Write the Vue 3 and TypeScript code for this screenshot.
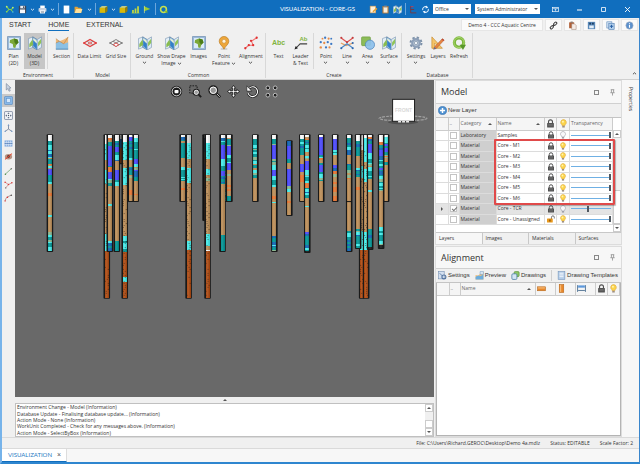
<script setup lang="ts">
import { ref } from 'vue'

interface BarItem { id: string; kind: 'btn' | 'sep' | 'chev'; icon?: string; label?: string; w: number }
interface RibbonItem { label: string[]; icon: string; w: number; drop?: boolean; on?: boolean; sepAfter?: boolean }
interface RibbonGroup { title: string; w: number; items: RibbonItem[] }
interface Layer { category: string; name: string; on: boolean; locked: boolean; lit: boolean; alpha: number }
interface Core { x: number; w: number; top: number; bottom: number; bands: string; seed: number; dots?: boolean; dark?: boolean }
interface Band { y: number; h: number; fill: string }

const quick: BarItem[] = [
  { id: 'q1', kind: 'btn', icon: 'plant', label: 'Application', w: 14 },
  { id: 'q2', kind: 'btn', icon: 'save', label: 'Save', w: 12 },
  { id: 'q3', kind: 'chev', label: 'Save options', w: 8 },
  { id: 'q4', kind: 'btn', icon: 'print', label: 'Print', w: 12 },
  { id: 'q5', kind: 'chev', label: 'Print options', w: 8 },
  { id: 'q6', kind: 'sep', w: 4 },
  { id: 'q7', kind: 'btn', icon: 'page', label: 'New', w: 12 },
  { id: 'q8', kind: 'btn', icon: 'folder', label: 'Open', w: 12 },
  { id: 'q9', kind: 'chev', label: 'Open recent', w: 10 },
  { id: 'q10', kind: 'sep', w: 3 },
  { id: 'q11', kind: 'btn', icon: 'cube', label: 'Model', w: 13 },
  { id: 'q12', kind: 'chev', label: 'Model options', w: 7 },
  { id: 'q13', kind: 'btn', icon: 'cube', label: 'Block', w: 12 },
  { id: 'q14', kind: 'btn', icon: 'bars', label: 'Chart', w: 12 },
  { id: 'q15', kind: 'btn', icon: 'flag', label: 'Flag', w: 12 },
  { id: 'q16', kind: 'sep', w: 4 },
  { id: 'q17', kind: 'btn', icon: 'cycle', label: 'Reload', w: 12 },
]
const quickRight: BarItem[] = [
  { id: 'r1', kind: 'btn', icon: 'noteedit', label: 'Edit note', w: 12 },
  { id: 'r2', kind: 'btn', icon: 'clipboard', label: 'Clipboard', w: 12 },
  { id: 'r3', kind: 'btn', icon: 'map', label: 'Map', w: 12 },
  { id: 'r4', kind: 'sep', w: 4 },
  { id: 'r5', kind: 'btn', icon: 'tree', label: 'Tree', w: 12 },
  { id: 'r6', kind: 'btn', icon: 'sync', label: 'Sync', w: 12 },
]
const groups: RibbonGroup[] = [
  { title: 'Environment', w: 72, items: [
    { label: ['Plan', '(2D)'], icon: 'plan', w: 21 },
    { label: ['Model', '(3D)'], icon: 'map', w: 21, on: true, sepAfter: true },
    { label: ['Section'], icon: 'section', w: 25 },
  ] },
  { title: 'Model', w: 57, items: [
    { label: ['Data Limit'], icon: 'datalimit', w: 29 },
    { label: ['Grid Size'], icon: 'gridsize', w: 24 },
  ] },
  { title: 'Common', w: 135, items: [
    { label: ['Ground'], icon: 'map', w: 25, drop: true },
    { label: ['Show Drape', 'Image'], icon: 'map', w: 29, drop: true },
    { label: ['Images'], icon: 'plan', w: 25 },
    { label: ['Point', 'Feature'], icon: 'pin', w: 26, drop: true },
    { label: ['Alignment'], icon: 'align', w: 28, drop: true },
  ] },
  { title: 'Create', w: 136, items: [
    { label: ['Text'], icon: 'abc', w: 23 },
    { label: ['Leader', '& Text'], icon: 'leader', w: 21, sepAfter: true },
    { label: ['Point'], icon: 'points', w: 22, drop: true },
    { label: ['Line'], icon: 'lines', w: 20, drop: true },
    { label: ['Area'], icon: 'area', w: 21, drop: true },
    { label: ['Surface'], icon: 'map', w: 22, drop: true },
  ] },
  { title: 'Database', w: 71, items: [
    { label: ['Settings'], icon: 'gear', w: 26, drop: true },
    { label: ['Layers'], icon: 'layers', w: 18 },
    { label: ['Refresh'], icon: 'refresh', w: 24 },
  ] },
]
const links = [
  { icon: 'chain', label: 'Link' },
  { icon: 'paste', label: 'Paste' },
  { icon: 'disk', label: 'Store' },
  { icon: 'copyadd', label: 'Duplicate' },
  { icon: 'info', label: 'Information' },
]
const sideTools = [
  { icon: 'cursor', label: 'Select', on: false, gap: false },
  { icon: 'boxsel', label: 'Select by box', on: true, gap: true },
  { icon: 'extent', label: 'Zoom extents', on: false, gap: false },
  { icon: 'axes', label: 'Axes', on: false, gap: true },
  { icon: 'grid', label: 'Grid', on: false, gap: false },
  { icon: 'hide', label: 'Hide', on: false, gap: true },
  { icon: 'line1', label: 'Line', on: false, gap: false },
  { icon: 'line2', label: 'Branch', on: false, gap: false },
  { icon: 'line3', label: 'Curve', on: false, gap: false },
]
const viewTools = [
  { icon: 'v-target', label: 'Home view' },
  { icon: 'v-zoombox', label: 'Zoom window' },
  { icon: 'v-zoom', label: 'Zoom' },
  { icon: 'v-pan', label: 'Pan' },
  { icon: 'v-rotate', label: 'Rotate' },
  { icon: 'v-fit', label: 'Fit' },
]
const layers = ref<Layer[]>([
  { category: 'Laboratory', name: 'Samples', on: false, locked: true, lit: false, alpha: 100 },
  { category: 'Material', name: 'Core - M1', on: false, locked: true, lit: true, alpha: 100 },
  { category: 'Material', name: 'Core - M2', on: false, locked: true, lit: true, alpha: 100 },
  { category: 'Material', name: 'Core - M3', on: false, locked: true, lit: true, alpha: 100 },
  { category: 'Material', name: 'Core - M4', on: false, locked: true, lit: true, alpha: 100 },
  { category: 'Material', name: 'Core - M5', on: false, locked: true, lit: true, alpha: 100 },
  { category: 'Material', name: 'Core - M6', on: false, locked: true, lit: true, alpha: 100 },
  { category: 'Material', name: 'Core - TCR', on: true, locked: true, lit: false, alpha: 43 },
  { category: 'Material', name: 'Core - Unassigned', on: false, locked: false, lit: true, alpha: 100 },
])
const messages = [
  'Environment Change - Model (Information)',
  'Database Update - Finalising database update... (Information)',
  'Action Mode - None (Information)',
  'WorkUnit Completed - Check for any messages above. (Information)',
  'Action Mode - SelectByBox (Information)',
]
const profile = ref('Office')
const user = ref('System Administrator')

/* Band codes: a letter and a thickness. Capitals are finely striped zones. */
const solid: Record<string, string> = {
  w: '#ffffff', g: '#d4d4d4', c: '#45f0ee', t: '#009696', b: '#4a48ff', n: '#1064b4',
  s: '#be8f58', o: '#ea7430', r: '#b04a10', k: '#141414', e: '#8ab890',
}
const mixed: Record<string, string[]> = {
  C: ['c', 't', 'c', 'e', 't'],
  T: ['t', 't', 'n', 't', 'c', 't'],
  B: ['n', 'b', 't', 'b'],
  S: ['s', 'c', 's', 'o', 'e', 't'],
  O: ['o', 's', 'o', 'o'],
}
const cores: Core[] = [
  { x: 47, w: 6, top: 134, bottom: 252, seed: 3, bands: 'w6 T13 n3 S12 b6 T6 C3 s4 O8 s19 c2 s15 S3 C7 T5 C5' },
  { x: 119, w: 4, top: 134, bottom: 164, seed: 4, dark: true, bands: 'w4 n9 r16' },
  { x: 104, w: 6, top: 134, bottom: 299, seed: 5, dots: true, bands: 'w9 c16 s10 c14 s50 c17 r48' },
  { x: 107, w: 6, top: 134, bottom: 252, seed: 6, bands: 'w3 O4 T4 b20 S6 b7 C7 s18 c2 s35 T11' },
  { x: 114, w: 6, top: 134, bottom: 252, seed: 7, bands: 'w6 T6 b5 T9 s9 b10 T4 c2 s55 C5 T10' },
  { x: 128, w: 6, top: 134, bottom: 202, seed: 8, bands: 'w2 b4 T19 s7 T6 S5 s12 O6 s5' },
  { x: 122, w: 6, top: 134, bottom: 299, seed: 9, dots: true, bands: 'w7 c18 s8 c17 s51 c5 C11 r25 c5 r17' },
  { x: 133, w: 6, top: 134, bottom: 202, seed: 10, bands: 'w3 C5 T16 B5 S6 B7 S4 s10 O4 s6' },
  { x: 180, w: 6, top: 134, bottom: 202, seed: 11, bands: 'w2 B4 O2 T15 s9 C13 T1 s7 O2 s11' },
  { x: 186, w: 6, top: 134, bottom: 299, seed: 12, dots: true, bands: 'g8 c16 s9 c15 s58 c9 r48' },
  { x: 203, w: 4, top: 134, bottom: 221, seed: 13, dark: true, bands: 'w3 n14 s12 b8 r48' },
  { x: 205, w: 6, top: 134, bottom: 299, seed: 14, dots: true, bands: 'w8 c16 s10 c6 S6 s53 c12 S4 w1 r48' },
  { x: 224, w: 4, top: 134, bottom: 202, seed: 15, dots: true, bands: 'w3 T14 s10 C17 O10 C12' },
  { x: 220, w: 6, top: 134, bottom: 252, seed: 16, bands: 'w3 T7 b14 c7 C5 b5 T8 s51 T12 S3 T3' },
  { x: 227, w: 6, top: 134, bottom: 202, seed: 17, bands: 'w3 S8 b9 C8 b7 S6 s9 O6 s5 C5' },
  { x: 253, w: 6, top: 134, bottom: 202, seed: 18, bands: 'w4 T10 C8 S18 T3 s24' },
  { x: 272, w: 6, top: 134, bottom: 252, seed: 19, bands: 'w4 C6 b14 S11 b6 C11 s9 O3 s3 c1 s33 T12 S2 C3' },
  { x: 287, w: 6, top: 140, bottom: 216, seed: 20, bands: 'n5 b13 T4 s6 b17 C6 s9 O2 s14' },
  { x: 300, w: 6, top: 134, bottom: 202, seed: 21, bands: 'w4 T16 s9 b8 s3 O7 s20' },
  { x: 305, w: 6, top: 134, bottom: 253, seed: 22, bands: 'w2 O3 T9 S12 b9 C13 O5 T10 s8 c1 s25 b2 T14 C3' },
  { x: 319, w: 6, top: 134, bottom: 202, seed: 23, bands: 'w2 b18 C3 S7 b7 C9 s20' },
  { x: 333, w: 6, top: 134, bottom: 202, seed: 24, bands: 'w4 b11 C5 s10 B6 S9 s2 O20' },
  { x: 347, w: 6, top: 134, bottom: 252, seed: 25, bands: 'w3 T17 s9 T6 S9 s52 C5 T12 n3' },
  { x: 360, w: 5, top: 134, bottom: 299, seed: 26, dots: true, bands: 'w15 s16 c12 s53 c19 r48' },
  { x: 364, w: 6, top: 134, bottom: 299, seed: 27, dots: true, bands: 'w3 c24 s7 c13 s50 c18 r48' },
  { x: 356, w: 6, top: 134, bottom: 249, seed: 28, bands: 'w6 T15 s12 T9 s10 O3 s39 C6 T13' },
  { x: 368, w: 6, top: 134, bottom: 250, seed: 29, bands: 'w2 O2 T5 b9 C11 S3 C12 s11 c2 s37 T18' },
  { x: 384, w: 6, top: 134, bottom: 202, seed: 30, bands: 'w2 C7 B8 S16 s33' },
  { x: 379, w: 6, top: 134, bottom: 249, seed: 31, bands: 'w7 O3 B15 C8 B7 C16 s36 T12 C6' },
]

function rand(seed: number): () => number {
  let s = seed * 7919
  return () => {
    s = (s * 16807) % 2147483647
    return s / 2147483647
  }
}
function bandsOf(c: Core): Band[] {
  const out: Band[] = []
  const next = rand(c.seed)
  let y = c.top + 1
  for (const token of c.bands.split(' ')) {
    const code = token[0]
    const end = Math.min(y + Number(token.slice(1)), c.bottom - 1)
    if (solid[code]) {
      out.push({ y, h: end - y, fill: solid[code] })
      y = end
      continue
    }
    const set = mixed[code]
    while (y < end) {
      const h = Math.min(1 + Math.floor(next() * 3), end - y)
      out.push({ y, h, fill: solid[set[Math.floor(next() * set.length)]] })
      y += h
    }
  }
  return out
}
function dotsOf(c: Core): { x: number; y: number }[] {
  if (!c.dots) return []
  const next = rand(c.seed + 50)
  const out: { x: number; y: number }[] = []
  for (let y = c.top + 9; y < c.bottom - 2; y += 2) {
    if (next() < 0.7) out.push({ x: c.x + 1 + Math.floor(next() * (c.w - 2)), y })
  }
  return out
}
const drawn = cores.map((c) => ({ ...c, parts: bandsOf(c), specks: dotsOf(c) }))
</script>

<template>
  <svg class="sprite" aria-hidden="true">
    <symbol id="chev" viewBox="0 0 8 8"><path d="M1.5 2.8 4 5.2 6.5 2.8" fill="none" stroke="currentColor" stroke-width="1.3" /></symbol>
    <symbol id="plant" viewBox="0 0 16 16"><g fill="none" stroke="#7fd04a" stroke-width="1.8"><path d="M3 3l4 5-4 4M7 8h4l3-3M10 8l4 4" /></g><circle cx="3" cy="3" r="1.5" fill="#bff06a" /><circle cx="14" cy="4.5" r="1.6" fill="#bff06a" /><circle cx="3" cy="12" r="1.5" fill="#8fdc50" /><circle cx="14" cy="12.5" r="1.4" fill="#49c0e8" /></symbol>
    <symbol id="save" viewBox="0 0 16 16"><rect x="1.5" y="1.5" width="13" height="13" rx="1" fill="#3c4658" /><rect x="4" y="1.5" width="8" height="4.5" fill="#e8eef6" /><rect x="3.5" y="8" width="9" height="6.5" fill="#f4f7fb" /><rect x="9" y="2.3" width="2" height="3" fill="#3c4658" /></symbol>
    <symbol id="print" viewBox="0 0 16 16"><rect x="4" y="1" width="8" height="5" fill="#fff" /><rect x="1" y="5.5" width="14" height="6.5" rx="1.5" fill="#c6d2e2" /><rect x="3.5" y="9.5" width="9" height="5.5" fill="#fff" /><path d="M5 11.5h6M5 13.3h6" stroke="#708098" /></symbol>
    <symbol id="page" viewBox="0 0 16 16"><path d="M3 1h10v14H3z" fill="#fff" /></symbol>
    <symbol id="folder" viewBox="0 0 16 16"><path d="M1 3h5l1.5 2H13v9H1z" fill="#e0a23a" /><path d="M4 7h11l-2.5 7H1z" fill="#ffe09a" /></symbol>
    <symbol id="cube" viewBox="0 0 16 16"><path d="M1 5l4-3h10l-4 3z" fill="#f8e878" /><path d="M1 5h10v9H1z" fill="#d8b808" /><path d="M11 5l4-3v9l-4 3z" fill="#9c8000" /></symbol>
    <symbol id="bars" viewBox="0 0 16 16"><path d="M1 14.5h14" stroke="#b4d840" /><path d="M2 9h3v5H2zM6.5 6h3v8h-3zM11 2h3v12h-3z" fill="#c6dc3c" /></symbol>
    <symbol id="flag" viewBox="0 0 16 16"><path d="M2 2l11 5-11 4z" fill="#9ccc30" /><path d="M2.5 1.5v13" stroke="#d8e890" stroke-width="1.2" /></symbol>
    <symbol id="cycle" viewBox="0 0 16 16"><circle cx="8" cy="8" r="5.2" fill="none" stroke="#c8e04c" stroke-width="2.8" /><path d="M9 10h6v5z" fill="#8cbc28" /></symbol>
    <symbol id="noteedit" viewBox="0 0 16 16"><rect x="2" y="2" width="10" height="12" fill="#fff1d8" stroke="#d89848" /><path d="M6 11l7-6 2 2-7 6z" fill="#e8a030" /></symbol>
    <symbol id="clipboard" viewBox="0 0 16 16"><rect x="2.5" y="2" width="11" height="13" fill="#b87a38" /><rect x="4.5" y="4" width="7" height="9.5" fill="#f8eedc" /><rect x="5.5" y="1" width="5" height="3" fill="#7c8894" /></symbol>
    <symbol id="tree" viewBox="0 0 16 16"><path d="M3 2v12h10M3 8h6" fill="none" stroke="#78383c" stroke-width="1.6" /><path d="M3 3h5" stroke="#d83848" stroke-width="1.5" /></symbol>
    <symbol id="sync" viewBox="0 0 16 16"><path d="M3 9a5 5 0 0 1 8-5M13 7a5 5 0 0 1-8 5" fill="none" stroke="#e4f0fc" stroke-width="1.8" /><path d="M9 1l4 4-5 1zM7 15l-4-4 5-1z" fill="#e4f0fc" /></symbol>
    <symbol id="winopt" viewBox="0 0 16 16"><rect x="1.5" y="3" width="13" height="10" fill="none" stroke="#fff" stroke-width="1.5" /><path d="M2 5.5h12M8 12V7M5.5 9.5 8 7l2.5 2.5" stroke="#fff" fill="none" stroke-width="1.3" /></symbol>
    <symbol id="plan" viewBox="0 0 16 16"><rect x=".7" y=".7" width="14.6" height="14.6" fill="#9cbcdc" stroke="#7c98b8" /><rect x="2.3" y="2.3" width="11.4" height="11.4" fill="#dcebf9" /><path d="M3.5 4.5 8 2.8 12 4l1.2 3.5-2.6 2.5L9.5 13.8 7.2 13l-.6-4L3 7.8z" fill="#7ca838" /><path d="M8 2.8 12 4l1.2 3.5-2.6 2.5L8.5 7z" fill="#4c7c18" /></symbol>
    <symbol id="map" viewBox="0 0 16 16"><path d="M.5 3l5-2v12l-5 2z" fill="#e4eff8" stroke="#7894b0" stroke-width=".7" /><path d="M5.5 1l5 3v12l-5-3z" fill="#94c0e4" stroke="#5078a0" stroke-width=".7" /><path d="M10.5 4l5-3v12l-5 3z" fill="#dce9f5" stroke="#7894b0" stroke-width=".7" /><path d="M1.5 9 5 4l1 6-4.5 3z" fill="#88bc50" /><path d="M6 4.5l4 4V15l-4-4z" fill="#3480c8" /><path d="M11.5 7 15 3v5l-3.5 4z" fill="#90c458" /><path d="M6 2.5l4 3v3l-4-4z" fill="#e8f0d8" /></symbol>
    <symbol id="section" viewBox="0 0 16 16"><path d="M1 3l4 3 5-2 5-3v14H1z" fill="#eeb878" /><path d="M1 8l4-2 5 3 5-2v8H1z" fill="#8cc0e4" /><path d="M1 3l4 3 5 3 5-8M1 8l4-2" fill="none" stroke="#b88858" stroke-width=".8" /><path d="M1 15h14" stroke="#4c88b8" /></symbol>
    <symbol id="datalimit" viewBox="0 0 16 16"><path d="M1 8l7-4 7 4-7 4z" fill="none" stroke="#e04040" stroke-width="1.3" /><path d="M4.5 6l7 4M11.5 6l-7 4" stroke="#808080" stroke-width=".9" /><path d="M6 8l2-1.3L10 8 8 9.3z" fill="#fff" stroke="#e04040" /><circle cx="1.5" cy="8" r="1.2" fill="#e04040" /><circle cx="14.5" cy="8" r="1.2" fill="#e04040" /></symbol>
    <symbol id="gridsize" viewBox="0 0 16 16"><path d="M1 8l7-4 7 4-7 4zM4.5 6l7 4M11.5 6l-7 4" fill="none" stroke="#808080" stroke-width="1.1" /><path d="M5 10l3-2 3 2-3 2z" fill="#fff" stroke="#e04848" /><path d="M0 8h3M13 8h3" stroke="#707070" /></symbol>
    <symbol id="pin" viewBox="0 0 16 16"><ellipse cx="8" cy="14.8" rx="4" ry="1" fill="#c8c8c8" /><path d="M8 15C6 11 2.5 9.5 2.5 6a5.5 5.5 0 0 1 11 0c0 3.5-3.5 5-5.5 9z" fill="#eda63a" stroke="#b87820" stroke-width=".7" /><circle cx="8" cy="6" r="2.2" fill="#fff4dc" stroke="#c08838" stroke-width=".6" /></symbol>
    <symbol id="align" viewBox="0 0 16 16"><path d="M1.5 14l4-3.5M5.5 10.5h5L8.5 6l6-4" fill="none" stroke="#f07070" stroke-width="1.2" /><g fill="#e03030"><circle cx="1.5" cy="14" r="1.3" /><circle cx="5.5" cy="10.5" r="1.3" /><circle cx="10.5" cy="10.5" r="1.3" /><circle cx="8" cy="5.5" r="1.3" /><circle cx="14.5" cy="2" r="1.3" /></g></symbol>
    <symbol id="leader" viewBox="0 0 16 16"><path d="M2 14l5-5h8" fill="none" stroke="#404040" stroke-width="1.2" /><path d="M.5 15.5l1.5-4 2.5 2.5z" fill="#202020" /></symbol>
    <symbol id="points" viewBox="0 0 16 16"><g fill="#3c78c4"><circle cx="2" cy="7" r="1.3" /><circle cx="7" cy="2" r="1.3" /><circle cx="10" cy="7" r="1.3" /><circle cx="14" cy="9" r="1.3" /><circle cx="8" cy="13" r="1.3" /><circle cx="14" cy="3" r="1.1" /></g><g fill="#e88c48"><circle cx="2" cy="13" r="1.4" /><circle cx="6" cy="8" r="1.3" /><circle cx="11" cy="3" r="1.2" /><circle cx="12" cy="13" r="1.2" /><circle cx="4" cy="3" r="1.1" /></g></symbol>
    <symbol id="lines" viewBox="0 0 16 16"><path d="M1 2l7 5 7-5" fill="none" stroke="#e05050" stroke-width="1.4" /><path d="M1 8l6 3 8-3" fill="none" stroke="#e8a060" stroke-width="1.4" /><path d="M1 14l7-5 7 5" fill="none" stroke="#4c88c8" stroke-width="1.4" /><g fill="#c04040"><circle cx="1.5" cy="2" r="1.2" /><circle cx="14.5" cy="2" r="1.2" /><circle cx="8" cy="7" r="1.2" /></g><g fill="#2c68b0"><circle cx="1.5" cy="14" r="1.2" /><circle cx="14.5" cy="14" r="1.2" /><circle cx="14.5" cy="8" r="1.2" /></g></symbol>
    <symbol id="area" viewBox="0 0 16 16"><rect x=".7" y="1" width="10" height="10" rx="1" fill="#8cbc58" stroke="#6c9c3c" stroke-width=".8" /><circle cx="10.2" cy="10" r="5.3" fill="#8cc0ec" fill-opacity=".92" stroke="#4c84bc" stroke-width=".8" /></symbol>
    <symbol id="gear" viewBox="0 0 16 16"><circle cx="8" cy="8" r="6.2" fill="none" stroke="#7c90a8" stroke-width="2.4" stroke-dasharray="2.6 2.27" /><circle cx="8" cy="8" r="4.3" fill="#c4d0de" stroke="#8ea0b8" stroke-width="2.6" /><circle cx="8" cy="8" r="2" fill="#eef2f6" stroke="#6c8098" stroke-width=".7" /></symbol>
    <symbol id="layers" viewBox="0 0 16 16"><path d="M1 1v13h12z" fill="#f4c468" stroke="#c88c30" stroke-width=".8" /><path d="M4 8v3.5h3.5z" fill="#f0efed" stroke="#c88c30" stroke-width=".6" /><path d="M4 12.5l9-9.5 2 1.7-9 9.5-3 1z" fill="#e88440" stroke="#a85828" stroke-width=".6" /><path d="M3 15.2l1-2.7 2 1.7z" fill="#5870a0" /><path d="M12 4l1-1 2.2 1.7-1 1.1z" fill="#c04838" /></symbol>
    <symbol id="refresh" viewBox="0 0 16 16"><circle cx="8" cy="7.5" r="5.3" fill="none" stroke="#7cb83c" stroke-width="3.6" /><circle cx="8" cy="7.5" r="5.8" fill="none" stroke="#b0d878" stroke-width="1" /><path d="M9 10h7l-3.5 6z" fill="#58962a" /></symbol>
    <symbol id="chain" viewBox="0 0 16 16"><g fill="none" stroke="#3c3c3c" stroke-width="1.7"><rect x="-3.3" y="-1.9" width="6.6" height="3.8" rx="1.9" transform="translate(11 4.8) rotate(-45)" /><rect x="-3.3" y="-1.9" width="6.6" height="3.8" rx="1.9" transform="translate(5 11.2) rotate(-45)" /><path d="M6.5 9.5l3-3" /></g></symbol>
    <symbol id="paste" viewBox="0 0 16 16"><rect x="2" y="2" width="9" height="11" rx="1" fill="#b06038" /><rect x="4.5" y="1" width="4" height="2.5" fill="#887870" /><path d="M6.5 5h5l3 3v7h-8z" fill="#f4ece8" stroke="#907060" stroke-width=".8" /></symbol>
    <symbol id="disk" viewBox="0 0 16 16"><rect x="1.5" y="1.5" width="13" height="13" fill="#5888b8" /><rect x="4" y="8" width="8" height="5" fill="#e4eef8" /><path d="M4 3h3v3H4zM9 3h3v3H9z" fill="#1c3c60" /></symbol>
    <symbol id="copyadd" viewBox="0 0 16 16"><rect x="1.5" y="1.5" width="9" height="11" fill="#d4e4f4" stroke="#5080b4" /><rect x="5" y="4" width="9.5" height="11" fill="#b4d0ec" stroke="#4474ac" /><path d="M9.8 6.5v6M6.8 9.5h6" stroke="#2860a4" stroke-width="1.8" /></symbol>
    <symbol id="info" viewBox="0 0 16 16"><circle cx="8" cy="8" r="6.5" fill="#5c90cc" stroke="#b0b8c4" /><path d="M8 7v5M8 4v1.8" stroke="#fff" stroke-width="2" /></symbol>
    <symbol id="cursor" viewBox="0 0 16 16"><path d="M4 1l8.5 8H9l2.2 4.7-2.2 1L6.8 10 4 12.5z" fill="#c8d2e0" stroke="#6c7c94" /></symbol>
    <symbol id="boxsel" viewBox="0 0 16 16"><rect x="1" y="1" width="14" height="14" rx="1" fill="#8cbcec" stroke="#4c80b8" /><rect x="4.5" y="4.5" width="7" height="7" fill="#d4e8fc" stroke="#5c90c8" /></symbol>
    <symbol id="extent" viewBox="0 0 16 16"><rect x="1" y="1" width="14" height="14" rx="1" fill="#f4f6fa" stroke="#6c7c94" stroke-width="1.3" /><path d="M8 2.5l2 2.5H6zM8 13.5l2-2.5H6zM2.5 8l2.5-2v4zM13.5 8 11 6v4z" fill="#44546c" /><circle cx="8" cy="8" r="1.2" fill="#44546c" /></symbol>
    <symbol id="axes" viewBox="0 0 16 16"><path d="M8 9V2M8 9l-6 4M8 9l6 4" stroke="#6c7c94" stroke-width="1.4" /><path d="M8 0l1.8 3H6.2zM.5 14l1.5-3 2 2.5zM15.5 14l-1.5-3-2 2.5z" fill="#6c94c4" /></symbol>
    <symbol id="grid" viewBox="0 0 16 16"><rect x="1" y="2.5" width="14" height="11" fill="#8cb0e0" /><path d="M1 6.2h14M1 9.8h14M4.5 3v10M8 3v10M11.5 3v10" stroke="#dce8f8" /><path d="M1 8h14" stroke="#4c74ac" /></symbol>
    <symbol id="hide" viewBox="0 0 16 16"><ellipse cx="8" cy="8.5" rx="6.5" ry="4.8" fill="#b89484" /><circle cx="8" cy="8" r="2.5" fill="#503c3c" /><path d="M2 13 14 3" stroke="#e04830" stroke-width="1.8" /></symbol>
    <symbol id="line1" viewBox="0 0 16 16"><path d="M2 13 13 3" stroke="#68a068" stroke-width="1.3" /><circle cx="2.5" cy="13" r="1.4" fill="#508c50" /><circle cx="13" cy="3" r="1.4" fill="#707070" /></symbol>
    <symbol id="line2" viewBox="0 0 16 16"><path d="M3 14l5-6 6-3M8 8 2 4" fill="none" stroke="#c87878" stroke-width="1.2" /><g fill="#d83838"><circle cx="2" cy="4" r="1.4" /><circle cx="8" cy="8" r="1.4" /><circle cx="14" cy="5" r="1.4" /></g><circle cx="3" cy="14" r="1.3" fill="#707070" /></symbol>
    <symbol id="line3" viewBox="0 0 16 16"><path d="M2 14c1-6 5-8 11-10" fill="none" stroke="#907070" stroke-width="1.2" /><circle cx="13" cy="4" r="1.4" fill="#505050" /><circle cx="6" cy="7.5" r="1.5" fill="#d83838" /><circle cx="2" cy="14" r="1.3" fill="#d83838" /></symbol>
    <symbol id="v-target" viewBox="0 0 16 16"><circle cx="8" cy="8" r="7" fill="#1c1c1c" /><circle cx="8" cy="8" r="5.4" fill="none" stroke="#fff" stroke-width="1" /><rect x="5.5" y="6" width="5" height="4" rx="1" fill="#fff" /></symbol>
    <symbol id="v-zoombox" viewBox="0 0 16 16"><rect x="1" y="1" width="9" height="9" fill="none" stroke="#1c1c1c" stroke-width="1.2" stroke-dasharray="2 1.3" /><circle cx="9" cy="9" r="3.6" fill="#9c9c9c" stroke="#1c1c1c" stroke-width="1.5" /><circle cx="9" cy="9" r="2.6" fill="none" stroke="#fff" /><path d="M12 12l3 3" stroke="#1c1c1c" stroke-width="2.2" /></symbol>
    <symbol id="v-zoom" viewBox="0 0 16 16"><circle cx="6.5" cy="6.5" r="5.2" fill="#989898" stroke="#1c1c1c" stroke-width="1.8" /><circle cx="6.5" cy="6.5" r="4" fill="none" stroke="#fff" stroke-width="1.2" /><path d="M10.5 10.5l4.5 4.5" stroke="#1c1c1c" stroke-width="3" /><path d="M11 11l3.5 3.5" stroke="#e8e8e8" /></symbol>
    <symbol id="v-pan" viewBox="0 0 16 16"><path d="M8 .5 10.5 4H9v3h3V5.5L15.5 8 12 10.5V9H9v3h1.5L8 15.5 5.5 12H7V9H4v1.5L.5 8 4 5.5V7h3V4H5.5z" fill="#fff" stroke="#1c1c1c" stroke-width="1.1" /></symbol>
    <symbol id="v-rotate" viewBox="0 0 16 16"><path d="M4 4a6 6 0 1 1-1.5 6" fill="none" stroke="#1c1c1c" stroke-width="3" /><path d="M4 4a6 6 0 1 1-1.5 6" fill="none" stroke="#fff" stroke-width="1.3" /><path d="M1 1v6.5h6z" fill="#fff" stroke="#1c1c1c" stroke-width=".8" /></symbol>
    <symbol id="v-fit" viewBox="0 0 16 16"><g fill="#1c1c1c" stroke="#e8e8e8" stroke-width=".9"><circle cx="3.5" cy="3.5" r="2.3" /><circle cx="12.5" cy="3.5" r="2.3" /><circle cx="3.5" cy="12.5" r="2.3" /><circle cx="12.5" cy="12.5" r="2.3" /></g></symbol>
    <symbol id="plus" viewBox="0 0 16 16"><circle cx="8" cy="8" r="7.2" fill="#4c90d0" stroke="#2c68a8" /><path d="M8 3.5v9M3.5 8h9" stroke="#fff" stroke-width="2.6" /></symbol>
    <symbol id="lock" viewBox="0 0 16 16"><path d="M4.5 8V5a3.5 3.5 0 0 1 7 0v3" fill="none" stroke="#505050" stroke-width="2" /><rect x="2" y="7" width="12" height="8" rx="1" fill="#505050" /><path d="M4 9.5h8M4 12h8" stroke="#888" /></symbol>
    <symbol id="unlock" viewBox="0 0 16 16"><path d="M9 8V4.5a2.8 2.8 0 0 1 5.6 0V7" fill="none" stroke="#606060" stroke-width="1.7" /><rect x="0" y="7" width="11.5" height="8" rx="1" fill="#e8981c" /><rect x="4.5" y="9" width="2.5" height="4" fill="#7c4c08" /></symbol>
    <symbol id="bulb" viewBox="0 0 16 16"><path d="M8 1a5 5 0 0 0-3 9l.8 2h4.4l.8-2a5 5 0 0 0-3-9z" fill="#fcd44c" stroke="#d8a030" /><rect x="5.8" y="12" width="4.4" height="3.2" fill="#a09080" /><circle cx="7" cy="5" r="1.8" fill="#fff4b0" /></symbol>
    <symbol id="bulboff" viewBox="0 0 16 16"><path d="M8 1a5 5 0 0 0-3 9l.8 2h4.4l.8-2a5 5 0 0 0-3-9z" fill="#f8f8fa" stroke="#8c8c98" /><rect x="5.8" y="12" width="4.4" height="3.2" fill="#a0a0a8" /></symbol>
    <symbol id="pushpin" viewBox="0 0 16 16"><path d="M4 1.5h8M5.5 2v6M10.5 2v6M3 8.5h10M8 9v6" stroke="#787878" stroke-width="1.5" fill="none" /></symbol>
    <symbol id="docset" viewBox="0 0 16 16"><rect x="1" y="1" width="10" height="13" fill="#d4e0f0" stroke="#6c88ac" /><circle cx="10.5" cy="10.5" r="3.5" fill="none" stroke="#5474a0" stroke-width="2" /><path d="M3 4l5 5" stroke="#5474a0" stroke-width="1.5" /></symbol>
    <symbol id="preview" viewBox="0 0 16 16"><path d="M1 7l5 1 4-4 5-3v14H1z" fill="#f0bc78" /><path d="M1 10l5-2 4 1 5-3v9H1z" fill="#6cacdc" /><path d="M9 1h6v5h-6z" fill="#dce9f5" stroke="#5c8cbc" stroke-width=".8" /></symbol>
    <symbol id="drawings" viewBox="0 0 16 16"><rect x="5.5" y="1" width="9" height="9" rx="2" fill="#8cc464" stroke="#4c8830" /><rect x="1.5" y="5" width="9" height="10" rx="2" fill="#d4e4f4" stroke="#40789c" stroke-width="1.3" /></symbol>
    <symbol id="template" viewBox="0 0 16 16"><rect x="2" y="1" width="12" height="14" fill="#b4cce8" stroke="#7090b8" /><path d="M4.5 4h7M4.5 7h7M4.5 10h7" stroke="#fff" stroke-width="1.4" /></symbol>
    <symbol id="hbar" viewBox="0 0 16 16"><rect x="1" y="5" width="14" height="7" fill="#e8882c" stroke="#b46418" /><path d="M2 7h12" stroke="#fcd098" stroke-width="1.5" /></symbol>
    <symbol id="vbar" viewBox="0 0 16 16"><rect x="4" y="1" width="8" height="14" fill="#e8882c" stroke="#b46418" /><path d="M6.5 2v12" stroke="#fcd098" stroke-width="1.5" /></symbol>
    <symbol id="span" viewBox="0 0 16 16"><path d="M1 2v12M15 2v12" stroke="#44688c" stroke-width="1.5" /><rect x="2" y="2.5" width="12" height="4" fill="#5c98dc" /><path d="M2 11.5h12" stroke="#44688c" stroke-width="1.5" /></symbol>
  </svg>

  <div class="app">
    <header class="titlebar">
      <template v-for="b in quick" :key="b.id">
        <span v-if="b.kind === 'sep'" class="bar-sep" :style="{ width: b.w + 'px' }"></span>
        <button v-else class="bar-btn" :aria-label="b.label" :style="{ width: b.w + 'px' }">
          <svg v-if="b.kind === 'btn'" class="i9"><use :href="'#' + b.icon" /></svg>
          <svg v-else class="i5"><use href="#chev" /></svg>
        </button>
      </template>
      <h1 class="title">VISUALIZATION - CORE-GS</h1>
      <template v-for="b in quickRight" :key="b.id">
        <span v-if="b.kind === 'sep'" class="bar-sep" :style="{ width: b.w + 'px' }"></span>
        <button v-else class="bar-btn" :aria-label="b.label" :style="{ width: b.w + 'px' }">
          <svg class="i9"><use :href="'#' + b.icon" /></svg>
        </button>
      </template>
      <label class="pick pick-profile">
        <select v-model="profile" aria-label="Profile"><option>Office</option></select>
        <span class="tri"></span>
      </label>
      <label class="pick pick-user">
        <select v-model="user" aria-label="User"><option>System Administrator</option></select>
        <span class="tri"></span>
      </label>
      <div class="win">
        <button aria-label="Ribbon display"><svg class="i7"><use href="#winopt" /></svg></button>
        <button aria-label="Minimize"><svg class="i7" viewBox="0 0 7 7"><path d="M1 4h5" stroke="#fff" /></svg></button>
        <button aria-label="Maximize"><svg class="i7" viewBox="0 0 7 7"><path d="M1.5 1.5h4v4h-4z" fill="none" stroke="#fff" stroke-width=".8" /></svg></button>
        <button aria-label="Close"><svg class="i7" viewBox="0 0 7 7"><path d="M1 1l5 5M6 1 1 6" stroke="#fff" stroke-width=".9" /></svg></button>
      </div>
    </header>

    <nav class="tabs">
      <a href="#start">START</a>
      <a href="#home" class="current">HOME</a>
      <a href="#external">EXTERNAL</a>
      <div class="project">
        <span class="project-name">Demo 4 - CCC Aquatic Centre</span>
        <button v-for="l in links" :key="l.icon" :aria-label="l.label"><svg class="i9"><use :href="'#' + l.icon" /></svg></button>
      </div>
    </nav>

    <section class="ribbon">
      <div v-for="g in groups" :key="g.title" class="group" :style="{ width: g.w + 'px' }">
        <div class="items">
          <template v-for="it in g.items" :key="it.label.join(' ')">
            <button class="rbtn" :class="{ on: it.on }" :style="{ width: it.w + 'px' }">
              <span v-if="it.icon === 'abc'" class="glyph abc">Abc</span>
              <span v-else-if="it.icon === 'leader'" class="glyph lead"><svg class="i14"><use href="#leader" /></svg><b>Ab</b></span>
              <svg v-else class="i14"><use :href="'#' + it.icon" /></svg>
              <span class="cap">
                <span>{{ it.label[0] }}</span>
                <span v-if="it.label[1]">{{ it.label[1] }}<svg v-if="it.drop" class="i5"><use href="#chev" /></svg></span>
                <svg v-else-if="it.drop" class="i5"><use href="#chev" /></svg>
              </span>
            </button>
            <span v-if="it.sepAfter" class="rsep"></span>
          </template>
        </div>
        <div class="gtitle">{{ g.title }}</div>
      </div>
      <button class="fold" aria-label="Collapse ribbon"><svg class="i5 flip"><use href="#chev" /></svg></button>
    </section>

    <main class="body">
      <aside class="side">
        <button v-for="t in sideTools" :key="t.icon" :class="{ on: t.on, gap: t.gap }" :aria-label="t.label"><svg class="i9"><use :href="'#' + t.icon" /></svg></button>
      </aside>

      <div class="work">
        <div class="view">
          <svg class="scene" viewBox="15 80 420 317">
            <defs>
              <linearGradient id="round" x1="0" x2="1" y1="0" y2="0">
                <stop offset="0" stop-color="#000" stop-opacity=".12" />
                <stop offset=".35" stop-color="#fff" stop-opacity=".08" />
                <stop offset="1" stop-color="#000" stop-opacity=".2" />
              </linearGradient>
            </defs>
            <g v-for="c in drawn" :key="c.seed">
              <rect :x="c.x - 0.3" :y="c.top" :width="c.w + 0.6" :height="c.bottom - c.top" rx="1" fill="#1a1a1a" />
              <rect v-for="(p, i) in c.parts" :key="i" :x="c.x + 1" :y="p.y" :width="c.w - 2" :height="p.h" :fill="p.fill" shape-rendering="crispEdges" />
              <rect v-for="(d, i) in c.specks" :key="'d' + i" :x="d.x" :y="d.y" width="1" height="1" fill="#241408" fill-opacity=".55" />
              <rect :x="c.x + 1" :y="c.top + 1" :width="c.w - 2" :height="c.bottom - c.top - 2" fill="url(#round)" />
              <rect v-if="c.dark" :x="c.x + 1" :y="c.top + 1" :width="c.w - 2" :height="c.bottom - c.top - 2" fill="#000" fill-opacity=".55" />
            </g>
            <path d="M347 201.5h5" stroke="#151515" />
            <ellipse cx="404" cy="118" rx="24" ry="2.5" fill="none" stroke="#a0a0a0" stroke-width="1.2" stroke-dasharray="3 1" />
            <ellipse cx="404" cy="122" rx="15" ry="2" fill="#505050" />
            <rect x="393.5" y="99" width="22" height="22" fill="#fff" stroke="#1c1c1c" />
            <text x="404.5" y="112" class="face" text-anchor="middle">FRONT</text>
            <path d="M399 121.5h11" stroke="#e8e8e8" stroke-width="1.5" stroke-dasharray="3 1" />
          </svg>
          <div class="vtools">
            <button v-for="v in viewTools" :key="v.icon" :aria-label="v.label"><svg class="i13"><use :href="'#' + v.icon" /></svg></button>
          </div>
        </div>
        <div class="split"><span class="tri up"></span></div>
        <div class="log">
          <ul><li v-for="m in messages" :key="m">{{ m }}</li></ul>
          <div class="scroll"><button aria-label="Scroll up"><span class="tri up"></span></button><span class="thumb"></span><button aria-label="Scroll down"><span class="tri"></span></button></div>
        </div>
      </div>

      <div class="docks">
        <section class="panel model">
          <header><h2>Model</h2><button aria-label="Maximize Model"><i class="sq"></i></button><button aria-label="Pin Model"><svg class="i7"><use href="#pushpin" /></svg></button></header>
          <div class="ptools"><button><svg class="i9"><use href="#plus" /></svg>New Layer</button></div>
          <div class="tablewrap">
            <table class="grid layers">
              <colgroup><col class="c12" /><col class="c11" /><col class="c37" /><col /><col class="c12" /><col class="c13" /><col class="c43" /></colgroup>
              <thead>
                <tr>
                  <th></th><th>..</th>
                  <th><span class="th">Category<span class="tri up"></span></span></th>
                  <th><span class="th">Name<span class="tri up"></span></span></th>
                  <th class="ic"><svg class="i9"><use href="#lock" /></svg></th>
                  <th class="ic"><svg class="i9"><use href="#bulb" /></svg></th>
                  <th>Transparency</th>
                </tr>
              </thead>
              <tbody>
                <tr v-for="l in layers" :key="l.name" :class="{ active: l.on }">
                  <td class="ic"><span v-if="l.on" class="tri right"></span></td>
                  <td class="ic"><input v-model="l.on" type="checkbox" :aria-label="l.name" /></td>
                  <td class="cat">{{ l.category }}</td>
                  <td>{{ l.name }}</td>
                  <td class="ic"><svg class="i8"><use :href="l.locked ? '#lock' : '#unlock'" /></svg></td>
                  <td class="ic"><svg class="i8"><use :href="l.lit ? '#bulb' : '#bulboff'" /></svg></td>
                  <td class="ic"><input v-model.number="l.alpha" type="range" min="0" max="100" :aria-label="l.name + ' transparency'" /></td>
                </tr>
              </tbody>
            </table>
            <div class="scroll"><button aria-label="Scroll up"><span class="tri up"></span></button><span class="thumb long"></span><button aria-label="Scroll down"><span class="tri"></span></button></div>
            <div class="mark"></div>
          </div>
          <nav class="ptabs"><a href="#layers" class="current">Layers</a><a href="#images">Images</a><a href="#materials">Materials</a><a href="#surfaces">Surfaces</a></nav>
        </section>

        <section class="panel alignment">
          <header><h2>Alignment</h2><button aria-label="Maximize Alignment"><i class="sq"></i></button><button aria-label="Pin Alignment"><svg class="i7"><use href="#pushpin" /></svg></button></header>
          <div class="ptools">
            <button><svg class="i9"><use href="#docset" /></svg>Settings</button>
            <button><svg class="i9"><use href="#preview" /></svg>Preview</button>
            <button><svg class="i9"><use href="#drawings" /></svg>Drawings</button>
            <span class="psep"></span>
            <button><svg class="i9"><use href="#template" /></svg>Drawing Templates</button>
          </div>
          <div class="empty">
            <table class="grid">
              <colgroup><col class="c12" /><col class="c11" /><col /><col class="c20" /><col class="c20" /><col class="c20" /><col class="c12" /><col class="c12" /></colgroup>
              <thead>
                <tr>
                  <th></th><th>..</th>
                  <th><span class="th">Name<span class="tri up"></span></span></th>
                  <th><svg class="i9"><use href="#hbar" /></svg></th>
                  <th><svg class="i9"><use href="#vbar" /></svg></th>
                  <th><svg class="i9"><use href="#span" /></svg></th>
                  <th class="ic"><svg class="i9"><use href="#lock" /></svg></th>
                  <th class="ic"><svg class="i9"><use href="#bulb" /></svg></th>
                </tr>
              </thead>
            </table>
          </div>
        </section>
      </div>

      <aside class="rail"><button>Properties</button></aside>
    </main>

    <footer class="status">
      <span>File: C:\Users\Richard.GEROC\Desktop\Demo 4a.mdlz</span>
      <span>Status: EDITABLE</span>
      <span>Scale Factor: 2</span>
    </footer>
    <div class="docs">
      <div class="doc"><a href="#visualization">VISUALIZATION</a><button aria-label="Close tab">×</button></div>
    </div>
  </div>
</template>

<style>
body { margin: 0; background: #f0f0f0; }
</style>

<style scoped>
.sprite { position: absolute; width: 0; height: 0; }
.app {
  box-sizing: border-box; min-height: 100vh; display: flex; flex-direction: column;
  border-left: 2px solid #76b3ea; border-right: 1px solid #3a86cc; border-bottom: 2px solid #2e86cf;
  background: #f0f0f0; color: #333; font: 5px/7px "Open Sans", "Liberation Sans", sans-serif;
}
.app * { box-sizing: border-box; }
button { border: 0; padding: 0; margin: 0; background: none; color: inherit; font: inherit; display: flex; align-items: center; justify-content: center; }
a { color: inherit; text-decoration: none; }
svg { display: block; flex: none; }
.i5 { width: 5px; height: 5px; }
.i7 { width: 7px; height: 7px; }
.i8 { width: 8px; height: 8px; }
.i9 { width: 9px; height: 9px; }
.i13 { width: 13px; height: 13px; }
.i14 { width: 14px; height: 14px; }
.tri { display: inline-block; width: 0; height: 0; border: 2px solid transparent; border-top-color: #555; border-bottom: 0; }
.tri.up { border-top: 0; border-bottom: 2px solid #555; }
.tri.right { border: 2px solid transparent; border-left-color: #555; border-right: 0; }

.titlebar { height: 18px; margin: 0 -1px 0 -2px; padding: 0 1px 0 2px; background: #106ebe; color: #fff; display: flex; align-items: center; }
.bar-btn { height: 14px; flex: none; color: #fff; }
.bar-sep { flex: none; height: 12px; display: flex; justify-content: center; }
.bar-sep::before { content: ""; width: 1px; background: #6ba6dc; }
.title { flex: 1; margin: 0; padding-right: 12px; text-align: right; font: 6px/8px Lato, "Open Sans", sans-serif; white-space: nowrap; }
.pick { position: relative; height: 10px; background: #fff; display: flex; align-items: center; flex: none; }
.pick select { appearance: none; width: 100%; height: 10px; border: 0; padding: 0 8px 0 2px; margin: 0; background: none; font: inherit; color: #333; }
.pick .tri { position: absolute; right: 2px; top: 4px; }
.pick-profile { width: 38px; margin-left: 2px; }
.pick-user { width: 65px; margin-left: 4px; }
.win { display: flex; margin-left: 3px; }
.win button { width: 24px; height: 16px; }

.tabs { height: 13px; display: flex; align-items: flex-start; font: 7px/10px "Liberation Sans", sans-serif; padding-left: 7px; }
.tabs > a { height: 13px; padding-top: 2px; margin-right: 17px; }
.tabs > a.current { border-bottom: 1px solid #106ebe; }
.project { margin-left: auto; display: flex; gap: 2px; padding: 1px 1px 0 0; font: 5px/10px "Open Sans", sans-serif; }
.project-name { width: 82px; text-align: center; background: #fafafa; border: 1px solid #e6e6e6; }
.project button { width: 17px; height: 12px; background: #fafafa; border: 1px solid #e6e6e6; }

.ribbon { height: 49px; display: flex; border-bottom: 1px solid #d0d0d0; padding-top: 2px; }
.group { flex: none; display: flex; flex-direction: column; border-right: 1px solid #d8d8d8; height: 45px; padding-left: 1px; }
.items { display: flex; height: 36px; }
.rbtn { flex: none; flex-direction: column; justify-content: flex-start; padding-top: 3px; gap: 3px; height: 36px; }
.rbtn.on { background: #c6c6c6; }
.cap { display: flex; flex-direction: column; align-items: center; line-height: 7px; white-space: nowrap; }
.cap span { display: flex; align-items: center; gap: 1px; }
.rsep { flex: none; width: 4px; display: flex; justify-content: center; }
.rsep::before { content: ""; width: 1px; background: #d8d8d8; }
.gtitle { text-align: center; line-height: 12px; }
.glyph { width: 14px; height: 14px; display: flex; align-items: center; justify-content: center; color: #82b440; font: bold 7px/14px "Liberation Sans", sans-serif; }
.lead { display: grid; }
.lead > * { grid-area: 1 / 1; }
.lead b { font: bold 6px/7px "Liberation Sans", sans-serif; justify-self: end; align-self: start; }
.fold { margin-left: auto; align-self: flex-end; width: 9px; height: 11px; }
.flip { transform: rotate(180deg); }

.body { flex: 1; display: flex; min-height: 0; }
.side { width: 13px; padding-top: 1px; flex: none; }
.side button { width: 13px; height: 13px; }
.side .on { background: #c9c9c9; }
.side .gap { margin-bottom: 2px; }
.work { flex: 1; min-width: 0; display: flex; flex-direction: column; }
.view { flex: 1; position: relative; background: #696969; min-height: 0; }
.scene { width: 100%; height: 100%; }
.face { font: bold 5px "Liberation Sans", sans-serif; fill: #d8d8d8; }
.vtools { position: absolute; left: 0; right: 2px; top: 4px; display: flex; justify-content: center; gap: 5px; }
.vtools button { width: 14px; height: 14px; }
.split { height: 6px; display: flex; align-items: center; justify-content: center; }
.log { height: 34px; display: flex; background: #fff; border: 1px solid #c0c0c0; }
.log ul { flex: 1; margin: 0; padding: 0 1px; list-style: none; display: grid; grid-template-rows: repeat(5, 1fr); align-items: center; line-height: 6px; }
.scroll { width: 8px; flex: none; background: #f0f0f0; display: flex; flex-direction: column; justify-content: space-between; }
.scroll button { height: 8px; background: #fff; border: 1px solid #ccc; }
.thumb { height: 8px; margin: auto 0 0; background: #fff; border: 1px solid #ccc; }
.thumb.long { height: 34px; }

.docks { width: 188px; flex: none; padding-left: 1px; display: flex; flex-direction: column; gap: 1px; background: #f0f0f0; }
.panel { display: flex; flex-direction: column; background: #f7f7f7; border: 1px solid #dcdcdc; }
.panel header { height: 22px; display: flex; align-items: center; padding: 0 5px; gap: 9px; }
.panel h2 { flex: 1; margin: 0; font: 9px/14px "Open Sans", sans-serif; color: #333; }
.panel header button { width: 7px; height: 7px; }
.sq { width: 5px; height: 5px; border: 1px solid #888; }
.ptools { height: 15px; display: flex; align-items: center; gap: 5px; padding: 0 2px; background: #f0f0f0; border-top: 1px solid #d0d0d0; border-bottom: 1px solid #c4c4c4; font: 6px/9px "Liberation Sans", sans-serif; }
.ptools button { gap: 1px; white-space: nowrap; }
.psep { width: 1px; height: 11px; background: #d0d0d0; }
.tablewrap { position: relative; display: flex; height: 114px; background: #fff; align-items: stretch; }
.tablewrap .scroll { margin-top: 12px; }
.grid { flex: 1; width: 100%; table-layout: fixed; border-collapse: collapse; }
.layers { height: 107px; align-self: flex-start; }
.grid th { height: 12px; padding: 0 1px; text-align: left; font-weight: normal; background: #f5f5f5; color: #666; border-right: 1px solid #ccc; border-bottom: 1px solid #ccc; white-space: nowrap; }
.grid td { padding: 0 1px; line-height: 7px; border-right: 1px solid #dcdcdc; border-bottom: 1px solid #dcdcdc; white-space: nowrap; }
.grid .ic { padding: 0; text-align: center; }
.grid .ic svg, .grid .ic input, .grid .ic .tri { margin: 0 auto; display: block; }
.grid .cat { background: #cfcfcf; }
.active td { background: #e4e4e4; }
.th { display: flex; align-items: center; justify-content: space-between; padding-right: 3px; }
.c11 { width: 11px; } .c12 { width: 12px; } .c13 { width: 13px; } .c20 { width: 20px; } .c37 { width: 37px; } .c43 { width: 43px; }
input[type="checkbox"] { appearance: none; width: 7px; height: 7px; border: 1px solid #c4c4c4; background: #fff; }
input[type="checkbox"]:checked::after { content: ""; display: block; width: 4px; height: 2px; margin: 1px 0 0 1px; border: solid #777; border-width: 0 0 1px 1px; transform: rotate(-45deg); }
input[type="range"] { appearance: none; width: 40px; height: 7px; background: linear-gradient(#6fb0e4, #6fb0e4) center / 100% 1px no-repeat; }
input[type="range"]::-webkit-slider-thumb { appearance: none; width: 2px; height: 6px; background: #505860; }
.mark { position: absolute; left: 58px; right: 6px; top: 21px; height: 66px; border: 2px solid #e04a4a; border-radius: 1px; box-shadow: 1px 1px 1px #0004; }
.ptabs { display: flex; height: 12px; border-top: 1px solid #c8c8c8; background: #f0f0f0; line-height: 11px; }
.ptabs a { flex: 1; padding-left: 3px; border-right: 1px solid #c8c8c8; }
.ptabs .current { background: #f7f7f7; }
.ptabs a:last-child { border-right: 0; }
.alignment { flex: 1; }
.alignment header { height: 21px; }
.empty { flex: 1; background: #fff; border: 1px solid #b4b4b4; border-top: 0; }
.rail { width: 17px; flex: none; background: #f7f7f7; padding-top: 7px; display: flex; justify-content: center; align-items: flex-start; }
.rail button { writing-mode: vertical-rl; font: 5px/9px "Open Sans", sans-serif; }

.status { height: 12px; display: flex; align-items: center; justify-content: flex-end; gap: 10px; padding-right: 6px; border-top: 1px solid #dadada; border-bottom: 1px solid #dadada; }
.docs { height: 13px; background: #f7f7f7; display: flex; }
.doc { display: flex; align-items: center; gap: 5px; padding: 0 5px 0 6px; background: #fff; border-right: 1px solid #ddd; border-bottom: 1px solid #106ebe; color: #2a7cc4; font: 6px/8px Lato, "Open Sans", sans-serif; }
.doc button { font: 7px/8px "Liberation Sans", sans-serif; color: #555; }
</style>
